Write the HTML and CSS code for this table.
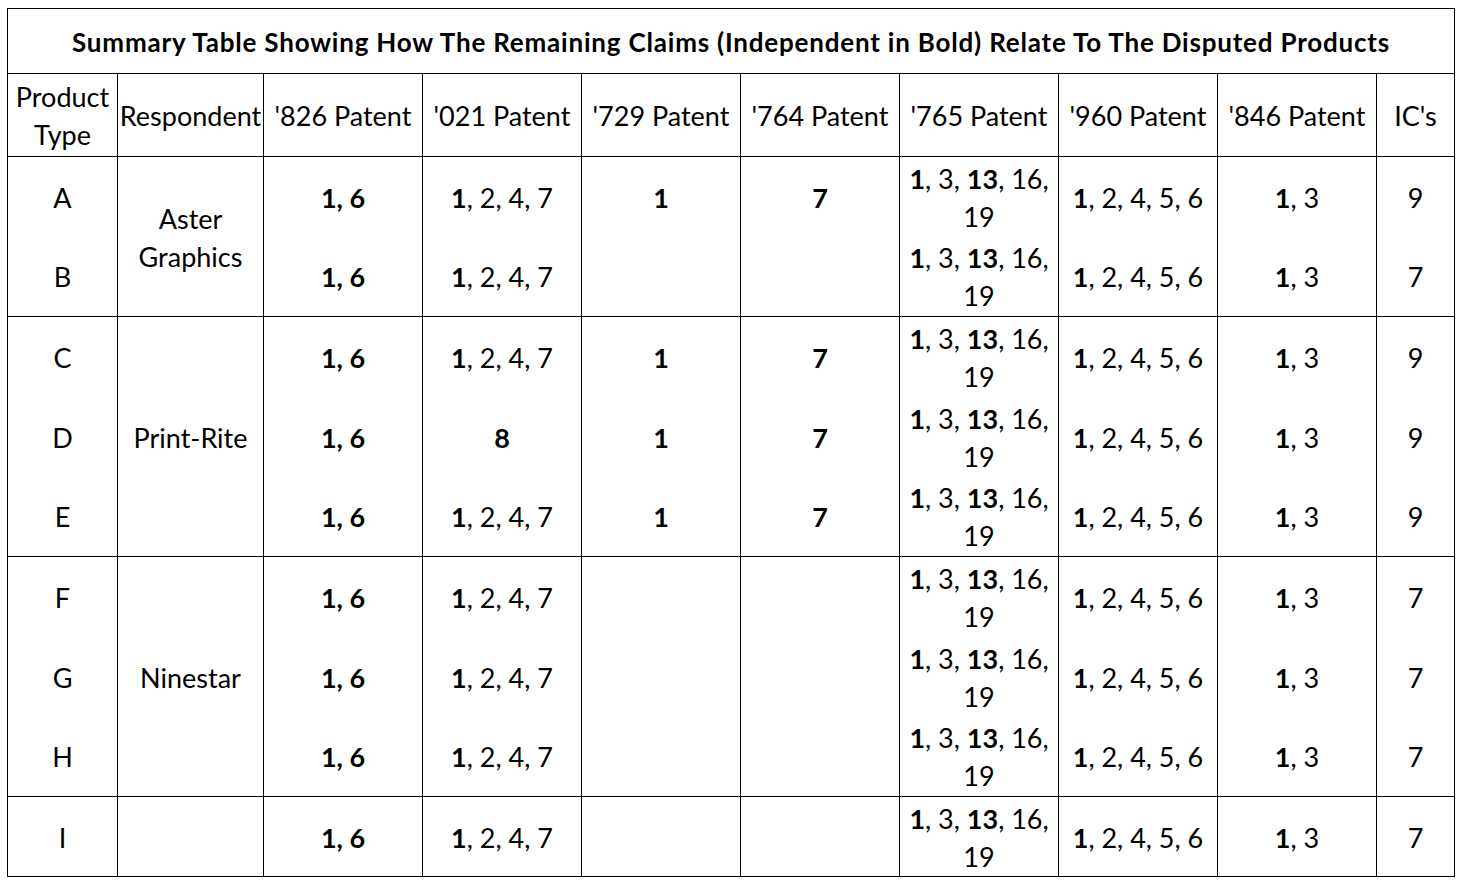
FILE: index.html
```html
<!DOCTYPE html>
<html>
<head>
<meta charset="utf-8">
<link rel="stylesheet" href="styles.css">
</head>
<body>
<div class="wrap">
<table class="summary">
<colgroup>
<col class="c-type"><col class="c-resp"><col class="c-pat"><col class="c-pat"><col class="c-pat"><col class="c-pat"><col class="c-pat"><col class="c-pat"><col class="c-pat"><col class="c-ic">
</colgroup>
<thead>
<tr class="title-row"><th colspan="10" class="title">Summary Table Showing How The Remaining Claims (Independent in Bold) Relate To The Disputed Products</th></tr>
<tr class="head-row">
<th>Product<br>Type</th><th>Respondent</th><th>'826 Patent</th><th>'021 Patent</th><th>'729 Patent</th><th>'764 Patent</th><th>'765 Patent</th><th>'960 Patent</th><th>'846 Patent</th><th>IC's</th>
</tr>
</thead>
<tbody>
<tr><td>A</td><td rowspan="2">Aster<br>Graphics</td><td><b>1, 6</b></td><td><b>1</b>, 2, 4, 7</td><td><b>1</b></td><td><b>7</b></td><td><b>1</b>, 3, <b>13</b>, 16,<br>19</td><td><b>1</b>, 2, 4, 5, 6</td><td><b>1</b>, 3</td><td>9</td></tr>
<tr><td>B</td><td><b>1, 6</b></td><td><b>1</b>, 2, 4, 7</td><td></td><td></td><td><b>1</b>, 3, <b>13</b>, 16,<br>19</td><td><b>1</b>, 2, 4, 5, 6</td><td><b>1</b>, 3</td><td>7</td></tr>
</tbody>
<tbody>
<tr><td>C</td><td rowspan="3">Print-Rite</td><td><b>1, 6</b></td><td><b>1</b>, 2, 4, 7</td><td><b>1</b></td><td><b>7</b></td><td><b>1</b>, 3, <b>13</b>, 16,<br>19</td><td><b>1</b>, 2, 4, 5, 6</td><td><b>1</b>, 3</td><td>9</td></tr>
<tr><td>D</td><td><b>1, 6</b></td><td><b>8</b></td><td><b>1</b></td><td><b>7</b></td><td><b>1</b>, 3, <b>13</b>, 16,<br>19</td><td><b>1</b>, 2, 4, 5, 6</td><td><b>1</b>, 3</td><td>9</td></tr>
<tr><td>E</td><td><b>1, 6</b></td><td><b>1</b>, 2, 4, 7</td><td><b>1</b></td><td><b>7</b></td><td><b>1</b>, 3, <b>13</b>, 16,<br>19</td><td><b>1</b>, 2, 4, 5, 6</td><td><b>1</b>, 3</td><td>9</td></tr>
</tbody>
<tbody>
<tr><td>F</td><td rowspan="3">Ninestar</td><td><b>1, 6</b></td><td><b>1</b>, 2, 4, 7</td><td></td><td></td><td><b>1</b>, 3, <b>13</b>, 16,<br>19</td><td><b>1</b>, 2, 4, 5, 6</td><td><b>1</b>, 3</td><td>7</td></tr>
<tr><td>G</td><td><b>1, 6</b></td><td><b>1</b>, 2, 4, 7</td><td></td><td></td><td><b>1</b>, 3, <b>13</b>, 16,<br>19</td><td><b>1</b>, 2, 4, 5, 6</td><td><b>1</b>, 3</td><td>7</td></tr>
<tr><td>H</td><td><b>1, 6</b></td><td><b>1</b>, 2, 4, 7</td><td></td><td></td><td><b>1</b>, 3, <b>13</b>, 16,<br>19</td><td><b>1</b>, 2, 4, 5, 6</td><td><b>1</b>, 3</td><td>7</td></tr>
</tbody>
<tbody>
<tr><td>I</td><td></td><td><b>1, 6</b></td><td><b>1</b>, 2, 4, 7</td><td></td><td></td><td><b>1</b>, 3, <b>13</b>, 16,<br>19</td><td><b>1</b>, 2, 4, 5, 6</td><td><b>1</b>, 3</td><td>7</td></tr>
</tbody>
</table>
</div>
</body>
</html>
```
FILE: styles.css
```css
html, body {
  margin: 0;
  padding: 0;
  background: #ffffff;
}
.wrap {
  padding: 8px 0 0 7px;
}
.summary {
  border-collapse: collapse;
  table-layout: fixed;
  width: 1448px;
  font-family: Lato, "Liberation Sans", sans-serif;
  font-size: 27px;
  color: #000;
  border: 1px solid #000;
}
.c-type { width: 110px; }
.c-resp { width: 146px; }
.c-pat { width: 159px; }
.c-ic { width: 78px; }
.summary th, .summary td {
  border-left: 1px solid #000;
  border-right: 1px solid #000;
  padding: 2px 0 0 0;
  text-align: center;
  vertical-align: middle;
  line-height: 38px;
  font-weight: normal;
  white-space: nowrap;
}
.summary td b {
  font-weight: bold;
}
.summary thead tr, .summary tbody {
  border-bottom: 1px solid #000;
}
.title-row { height: 65px; }
.summary th.title {
  font-weight: bold;
  font-size: 26px;
  letter-spacing: 0.8px;
  padding: 1px 0 0 0;
}
.head-row { height: 83px; }
.summary tbody tr { height: 80px; }
```
